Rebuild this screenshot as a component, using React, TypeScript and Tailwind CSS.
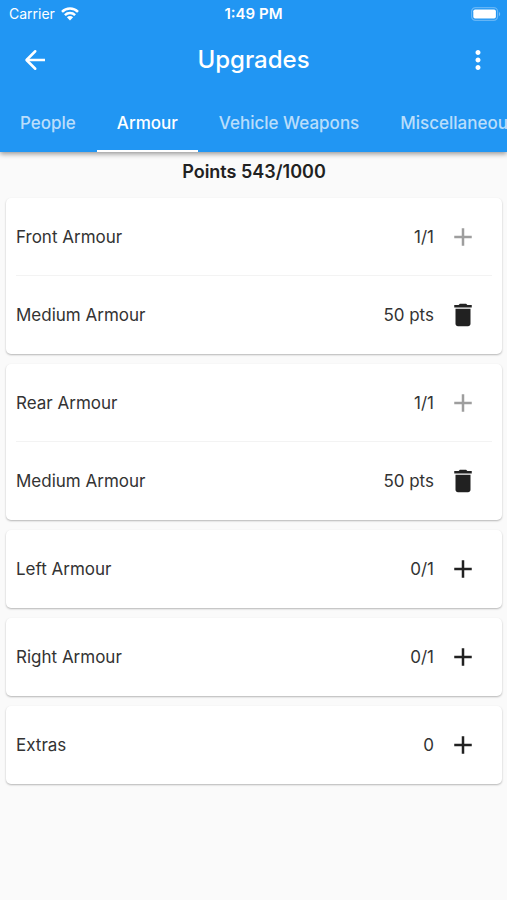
import { useState } from 'react'
import clsx from 'clsx'
import { MdAdd, MdDelete, MdMoreVert } from 'react-icons/md'

interface Slot {
  name: string
  count: string
  full: boolean
  items: { name: string; cost: string }[]
}

const tabs = ['People', 'Armour', 'Vehicle Weapons', 'Miscellaneous']

const slots: Slot[] = [
  { name: 'Front Armour', count: '1/1', full: true, items: [{ name: 'Medium Armour', cost: '50 pts' }] },
  { name: 'Rear Armour', count: '1/1', full: true, items: [{ name: 'Medium Armour', cost: '50 pts' }] },
  { name: 'Left Armour', count: '0/1', full: false, items: [] },
  { name: 'Right Armour', count: '0/1', full: false, items: [] },
  { name: 'Extras', count: '0', full: false, items: [] },
]

function WifiIcon() {
  return (
    <svg width="18" height="14" viewBox="0 0 18 14" fill="none" stroke="currentColor" strokeWidth="2.5">
      <path d="M1 4.9a11.4 11.4 0 0 1 16 0" />
      <path d="M3.9 8.1a7.3 7.3 0 0 1 10.2 0" />
      <path d="M9 13.4 5.9 10.3a4.4 4.4 0 0 1 6.2 0z" fill="currentColor" stroke="none" />
    </svg>
  )
}

function BatteryIcon() {
  return (
    <svg width="30" height="14" viewBox="0 0 30 14">
      <rect x="0.6" y="0.6" width="26" height="12.8" rx="4" fill="none" stroke="white" strokeOpacity="0.3" strokeWidth="1.2" />
      <rect x="2.3" y="2.5" width="22.6" height="9" rx="1.8" fill="white" />
      <path d="M28 4.9c1.6.6 1.6 3.6 0 4.2z" fill="white" fillOpacity="0.4" />
    </svg>
  )
}

function StatusBar() {
  return (
    <div className="grid h-7 grid-cols-[1fr_auto_1fr] items-center px-1.5 text-sm">
      <div className="flex items-center gap-1.5 pl-[3px]">
        <span>Carrier</span>
        <WifiIcon />
      </div>
      <span className="text-[15px] font-semibold">1:49 PM</span>
      <div className="flex justify-end">
        <BatteryIcon />
      </div>
    </div>
  )
}

function SlotCard({ slot }: { slot: Slot }) {
  return (
    <section className="rounded-[5px] bg-white px-2.5 shadow-[0_1px_2px_rgba(0,0,0,0.28)]">
      <div className={clsx('flex h-[78px] items-center', slot.items.length > 0 && 'border-b border-[#f3f3f3]')}>
        <h2 className="flex-1">{slot.name}</h2>
        <span>{slot.count}</span>
        <button
          aria-label={`Add to ${slot.name}`}
          disabled={slot.full}
          className="flex h-[58px] w-[58px] items-center justify-center text-[#212121] disabled:text-[#9e9e9e]"
        >
          <MdAdd size={30} />
        </button>
      </div>
      {slot.items.map((item) => (
        <div key={item.name} className="flex h-[78px] items-center">
          <span className="flex-1">{item.name}</span>
          <span>{item.cost}</span>
          <button
            aria-label={`Remove ${item.name}`}
            className="flex h-[58px] w-[58px] items-center justify-center text-[#212121]"
          >
            <MdDelete size={30} />
          </button>
        </div>
      ))}
    </section>
  )
}

export default function App() {
  const [active, setActive] = useState('Armour')

  return (
    <div className="min-h-screen bg-[#fafafa] font-['Inter',sans-serif] text-[17px] leading-7 text-[#333333]">
      <header className="bg-[#2196f3] text-white shadow-[0_2px_5px_rgba(0,0,0,0.4)]">
        <StatusBar />
        <div className="grid h-16 grid-cols-[1fr_auto_1fr] items-center px-1.5">
          <button aria-label="Back" className="flex h-[58px] w-[58px] items-center justify-center">
            <svg width="30" height="30" viewBox="0 0 24 24" fill="none" stroke="currentColor" strokeWidth="2">
              <path d="M20 12H5" />
              <path d="M12.2 5 5.2 12l7 7" strokeLinejoin="round" strokeLinecap="round" />
            </svg>
          </button>
          <h1 className="text-2xl font-medium">Upgrades</h1>
          <button
            aria-label="More options"
            className="flex h-[58px] w-[46px] items-center justify-center justify-self-end"
          >
            <MdMoreVert size={30} />
          </button>
        </div>
        <nav className="flex h-[60px] gap-px overflow-hidden">
          {tabs.map((tab) => (
            <button
              key={tab}
              onClick={() => setActive(tab)}
              className={clsx(
                'shrink-0 border-b-2 px-5 pt-1 font-medium',
                active === tab ? 'border-white' : 'border-transparent text-white/70',
              )}
            >
              {tab}
            </button>
          ))}
        </nav>
      </header>

      <main className="pt-1.5 pr-[5px] pb-6 pl-1.5">
        <p className="text-center text-lg font-semibold text-[#212121]">Points 543/1000</p>
        <div className="flex flex-col gap-2.5 pt-3">
          {slots.map((slot) => (
            <SlotCard key={slot.name} slot={slot} />
          ))}
        </div>
      </main>
    </div>
  )
}
